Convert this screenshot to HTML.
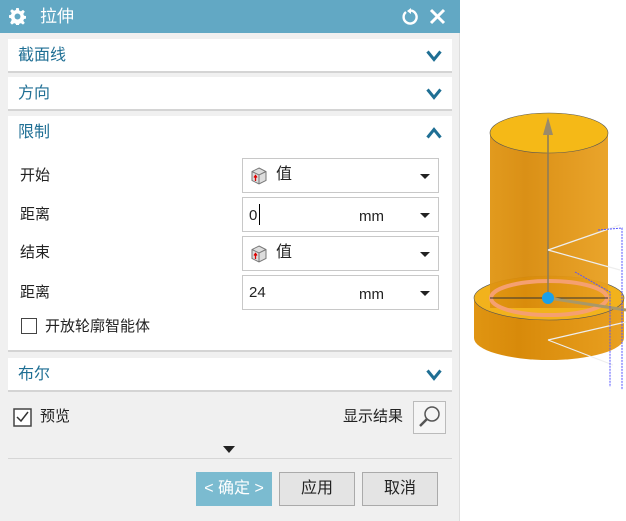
<!DOCTYPE html>
<html><head><meta charset="utf-8"><style>
*{margin:0;padding:0;box-sizing:border-box}
body{width:626px;height:521px;background:#fff;position:relative;overflow:hidden;font-family:"Liberation Sans","Noto Sans CJK SC",sans-serif;font-size:15px;color:#222;line-height:1}
.dlg{position:absolute;left:0;top:0;width:460px;height:521px;background:#f0f0f0;border-right:1px solid #ddd}
.title{position:absolute;left:0;top:0;width:460px;height:33px;background:#62a8c4;color:#fff;font-size:17px}
.sec{position:absolute;left:8px;width:444px;background:#fff;border-bottom:2px solid #d4d4d4}
.sh{position:absolute;left:10px;top:9px;color:#1f6f94;font-size:16px}
.chev{position:absolute;right:10px;top:11px}
.lbl{position:absolute;left:20px;font-size:15px}
.fld{position:absolute;left:242px;width:197px;height:35px;border:1px solid #c8c8c8;background:#fff}
.dd{position:absolute;right:8px;top:15px;width:0;height:0;border-left:5px solid transparent;border-right:5px solid transparent;border-top:5px solid #222}
.btn{position:absolute;top:472px;width:76px;height:34px;border:1px solid #aaa;background:#e4e4e4;text-align:center;line-height:32px;font-size:16px}
</style></head><body>
<div class="dlg">
<div class="title">
<svg style="position:absolute;left:9px;top:8px" width="17" height="17" viewBox="0 0 20 20"><path fill="#fff" d="M8.5 0h3l.5 3 2 1 2.5-1.8 2.1 2.1L16.8 7l.9 2 2.3.5v3l-2.3.5-.9 2 1.8 2.5-2.1 2.1-2.5-1.8-2 .9-.5 2.3h-3l-.5-2.3-2-.9-2.5 1.8-2.1-2.1L3.2 14l-.9-2L0 11.5v-3L2.3 8l.9-2-1.8-2.5 2.1-2.1L6 3.2l2-.9z"/><circle cx="10" cy="10" r="3.5" fill="#62a8c4"/></svg>
<span style="position:absolute;left:40px;top:8px">拉伸</span>
<svg style="position:absolute;left:401px;top:8px" width="18" height="18" viewBox="0 0 18 18"><path d="M5 4A6.5 6.5 0 1 0 10 2.6" fill="none" stroke="#fff" stroke-width="2.4"/><path d="M10 0v6l-4-3z" fill="#fff"/></svg>
<svg style="position:absolute;left:429px;top:8px" width="17" height="17" viewBox="0 0 17 17"><path d="M2 2L15 15M15 2L2 15" stroke="#fff" stroke-width="3"/></svg>
</div>
<div class="sec" style="top:39px;height:34px"><span class="sh">截面线</span><svg class="chev" width="16" height="12" viewBox="0 0 16 12"><path d="M1.5 1.5l6.5 8 6.5-8" fill="none" stroke="#1f6f94" stroke-width="3"/></svg></div>
<div class="sec" style="top:77px;height:34px"><span class="sh">方向</span><svg class="chev" width="16" height="12" viewBox="0 0 16 12"><path d="M1.5 1.5l6.5 8 6.5-8" fill="none" stroke="#1f6f94" stroke-width="3"/></svg></div>
<div class="sec" style="top:116px;height:236px"><span class="sh">限制</span><svg class="chev" width="16" height="12" viewBox="0 0 16 12"><path d="M1.5 10.5l6.5-8 6.5 8" fill="none" stroke="#1f6f94" stroke-width="3"/></svg></div>
<span class="lbl" style="top:168px">开始</span>
<span class="lbl" style="top:207px">距离</span>
<span class="lbl" style="top:245px">结束</span>
<span class="lbl" style="top:285px">距离</span>
<div class="fld" style="top:158px"><svg style="position:absolute;left:7px;top:8px" width="18" height="18" viewBox="0 0 18 18"><path d="M9 1l7 3.5v9L9 17l-7-3.5v-9z" fill="#ddd" stroke="#777"/><path d="M2 4.5L9 8l7-3.5M9 8v9" fill="none" stroke="#777"/><path d="M5.5 14V9M4 10.5l1.5-2 1.5 2" stroke="#d00" fill="none" stroke-width="1.3"/></svg><span style="position:absolute;left:33px;top:8px;font-size:16px">值</span><div class="dd"></div></div>
<div class="fld" style="top:197px"><span style="position:absolute;left:6px;top:10px">0</span><div style="position:absolute;left:16px;top:6px;width:1px;height:21px;background:#000"></div><span style="position:absolute;left:116px;top:11px">mm</span><div class="dd"></div></div>
<div class="fld" style="top:236px"><svg style="position:absolute;left:7px;top:8px" width="18" height="18" viewBox="0 0 18 18"><path d="M9 1l7 3.5v9L9 17l-7-3.5v-9z" fill="#ddd" stroke="#777"/><path d="M2 4.5L9 8l7-3.5M9 8v9" fill="none" stroke="#777"/><path d="M5.5 14V9M4 10.5l1.5-2 1.5 2" stroke="#d00" fill="none" stroke-width="1.3"/></svg><span style="position:absolute;left:33px;top:8px;font-size:16px">值</span><div class="dd"></div></div>
<div class="fld" style="top:275px"><span style="position:absolute;left:6px;top:9px">24</span><span style="position:absolute;left:116px;top:11px">mm</span><div class="dd"></div></div>
<div style="position:absolute;left:21px;top:318px;width:16px;height:16px;border:1.5px solid #444;background:#fff"></div>
<span class="lbl" style="left:45px;top:319px">开放轮廓智能体</span>
<div class="sec" style="top:358px;height:34px"><span class="sh">布尔</span><svg class="chev" width="16" height="12" viewBox="0 0 16 12"><path d="M1.5 1.5l6.5 8 6.5-8" fill="none" stroke="#1f6f94" stroke-width="3"/></svg></div>
<svg style="position:absolute;left:13px;top:408px" width="19" height="19" viewBox="0 0 19 19"><rect x="1" y="1" width="17" height="17" fill="#fff" stroke="#444" stroke-width="1.5"/><path d="M4 9l4 4 7-9" fill="none" stroke="#333" stroke-width="1.5"/></svg>
<span class="lbl" style="left:40px;top:409px">预览</span>
<span class="lbl" style="left:343px;top:409px">显示结果</span>
<div style="position:absolute;left:413px;top:401px;width:33px;height:33px;border:1px solid #bbb;background:#f5f5f5"><svg width="31" height="31" viewBox="0 0 31 31"><circle cx="18" cy="12" r="7" fill="none" stroke="#555" stroke-width="1.5"/><path d="M13 17l-7 7" stroke="#555" stroke-width="2.5"/></svg></div>
<div style="position:absolute;left:223px;top:446px;border-left:6px solid transparent;border-right:6px solid transparent;border-top:7px solid #222"></div>
<div style="position:absolute;left:8px;top:458px;width:444px;height:1px;background:#d6d6d6"></div>
<div class="btn" style="left:196px;background:#7bbbd0;border-color:#7bbbd0;color:#fff">&lt; 确定 &gt;</div>
<div class="btn" style="left:279px">应用</div>
<div class="btn" style="left:362px">取消</div>
</div>
<svg style="position:absolute;left:460px;top:90px" width="166" height="300" viewBox="0 0 166 300">
<defs><linearGradient id="g" x1="0" x2="1"><stop offset="0" stop-color="#e09512"/><stop offset=".3" stop-color="#d88a0a"/><stop offset="1" stop-color="#e9a020"/></linearGradient></defs>
<path d="M14 208v40a75 22 0 0 0 150 0v-40z" fill="url(#g)"/>
<ellipse cx="89" cy="208" rx="75" ry="22" fill="#f2b21c" stroke="#555" stroke-width=".6"/>
<path d="M30 43v175h118V43z" fill="url(#g)" opacity=".95"/>
<ellipse cx="89" cy="43" rx="59" ry="20" fill="#f5b917" stroke="#555" stroke-width=".6"/>
<ellipse cx="89" cy="208" rx="58" ry="17" fill="none" stroke="#f5a070" stroke-width="4"/>
<path d="M88 30v178" stroke="#8a7a5a" stroke-width="1.5"/><path d="M83 45l5-18 5 18z" fill="#9a8a6a"/>
<path d="M30 208h118" stroke="#333" stroke-width="1"/>
<path d="M88 208l78 12" stroke="#a89868" stroke-width="3"/>
<path d="M88 160l72-25M88 160l72 20M88 250l78-18M88 250l65 25" stroke="#eee" stroke-width="1.2"/>
<path d="M138 140l24-2v170M115 182l35 20v95" stroke="#55f" stroke-width="1" stroke-dasharray="2 1" fill="none"/>
<circle cx="88" cy="208" r="6" fill="#1aa0e8"/>
</svg>
</body></html>
